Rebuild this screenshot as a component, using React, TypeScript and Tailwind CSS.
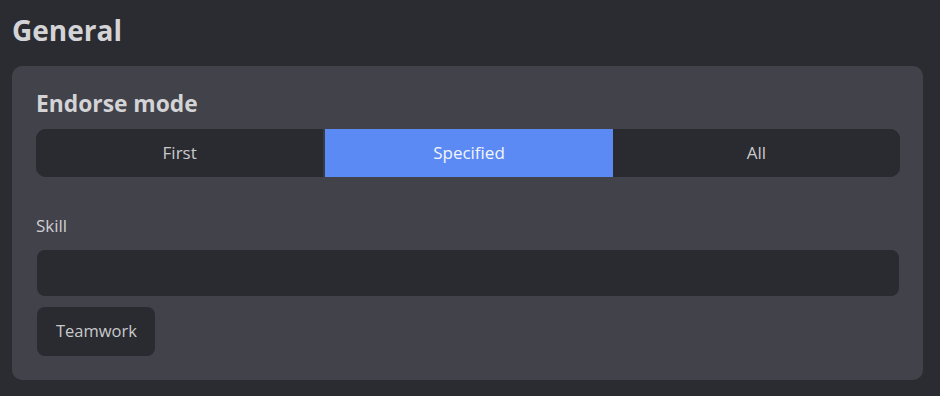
import React from "react";

export default function App() {
  return (
    <div className="w-[940px] h-[396px] bg-[#2b2c31] overflow-hidden" style={{ fontFamily: '"Open Sans", "Noto Sans", sans-serif' }}>
      <div className="pl-[12px] pt-[12px]">
        <h1 className="text-[28px] leading-[36px] font-bold text-[#d4d4d6]" style={{ fontFamily: '"Open Sans", sans-serif' }}>
          General
        </h1>
        <div className="mt-[18px] w-[911px] rounded-[10px] bg-[#41424a] pl-[24px] pr-[23px] pt-[24px] pb-[24px]">
          <h2 className="text-[22.8px] leading-[28px] font-bold text-[#d4d4d6]" style={{ fontFamily: '"Open Sans", sans-serif' }}>
            Endorse mode
          </h2>
          <div className="mt-[11px] flex h-[48px] rounded-[10px] overflow-hidden bg-[#2a2b30]">
            <button className="flex-1 flex items-center justify-center text-[17px] text-[#c9c9cc] bg-[#2a2b30]">First</button>
            <div className="w-[2px] bg-[#3a3b41]" />
            <button className="flex-1 flex items-center justify-center text-[17px] text-[#f3f5fb] bg-[#5b8af5]">Specified</button>
            <button className="flex-1 flex items-center justify-center text-[17px] text-[#c9c9cc] bg-[#2a2b30]">All</button>
          </div>
          <div className="mt-[37px] text-[17px] leading-[24px] text-[#cfcfd2]">Skill</div>
          <div className="mt-[12px] mx-px h-[46px] rounded-[8px] bg-[#2a2b30]" />
          <div className="mt-[11px] ml-px">
            <button className="h-[49px] pl-[19px] pr-[18px] rounded-[8px] bg-[#2a2b30] text-[16.5px] text-[#c9c9cc]">Teamwork</button>
          </div>
        </div>
      </div>
    </div>
  );
}
